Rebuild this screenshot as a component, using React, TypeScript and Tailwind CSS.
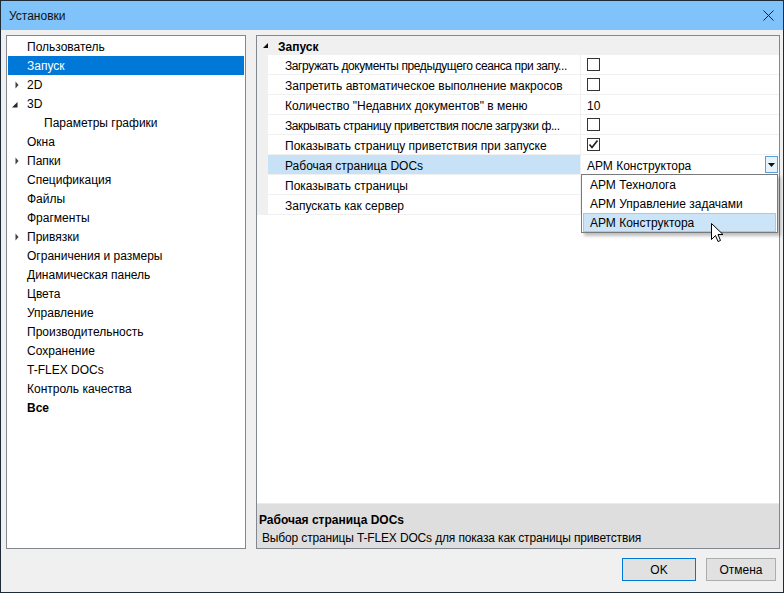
import React from "react";

type TreeItem = {
  label: string;
  selected?: boolean;
  arrow?: "right" | "down";
  indent?: boolean;
  bold?: boolean;
};

const treeItems: TreeItem[] = [
  { label: "Пользователь" },
  { label: "Запуск", selected: true },
  { label: "2D", arrow: "right" },
  { label: "3D", arrow: "down" },
  { label: "Параметры графики", indent: true },
  { label: "Окна" },
  { label: "Папки", arrow: "right" },
  { label: "Спецификация" },
  { label: "Файлы" },
  { label: "Фрагменты" },
  { label: "Привязки", arrow: "right" },
  { label: "Ограничения и размеры" },
  { label: "Динамическая панель" },
  { label: "Цвета" },
  { label: "Управление" },
  { label: "Производительность" },
  { label: "Сохранение" },
  { label: "T-FLEX DOCs" },
  { label: "Контроль качества" },
  { label: "Все", bold: true },
];

type Prop = {
  label: string;
  value?: "check" | "checked" | "text" | "combo" | "none";
  text?: string;
  selected?: boolean;
  tight?: boolean;
};

const props: Prop[] = [
  { label: "Загружать документы предыдущего сеанса при запу...", value: "check", tight: true },
  { label: "Запретить автоматическое выполнение макросов", value: "check" },
  { label: "Количество \"Недавних документов\" в меню", value: "text", text: "10" },
  { label: "Закрывать страницу приветствия после загрузки ф...", value: "check", tight: true },
  { label: "Показывать страницу приветствия при запуске", value: "checked" },
  { label: "Рабочая страница DOCs", value: "combo", selected: true },
  { label: "Показывать страницы", value: "none" },
  { label: "Запускать как сервер", value: "none" },
];

function Arrow({ kind }: { kind?: "right" | "down" }) {
  return (
    <svg width="19" height="19" viewBox="0 0 19 19" className="shrink-0">
      {kind === "right" && <polygon points="7.5,6.5 10.5,10 7.5,13.5" fill="#404040" />}
      {kind === "down" && <polygon points="9.5,8 9.5,13.5 4,13.5" fill="#262626" />}
    </svg>
  );
}

function CheckBox({ checked }: { checked?: boolean }) {
  return (
    <div className="w-[13px] h-[13px] border border-[#333333] bg-white flex items-center justify-center">
      {checked && (
        <svg width="11" height="11" viewBox="0 0 11 11">
          <path d="M1.5 5.5 L4 8.5 L9.5 1.5" fill="none" stroke="#1a1a1a" strokeWidth="1.6" />
        </svg>
      )}
    </div>
  );
}

export default function App() {
  return (
    <div className="w-[784px] h-[593px] border border-[#1e2a36] bg-[#f0f0f0] flex flex-col text-[12px] text-black font-['Liberation_Sans',Arial,sans-serif] overflow-hidden relative">
      {/* Title bar */}
      <div className="h-[29px] shrink-0 bg-[#80c3fa] flex items-center justify-between pl-[8px] pr-[9px]">
        <span className="text-[12px] text-[#111]">Установки</span>
        <svg width="11" height="11" viewBox="0 0 11 11">
          <path d="M0.5 0.5 L10.5 10.5 M10.5 0.5 L0.5 10.5" stroke="#1a1a1a" strokeWidth="1" />
        </svg>
      </div>

      {/* Body */}
      <div className="flex-1 flex flex-col pl-[5px] pr-[3px] pt-[5px] pb-[11px]">
        <div className="h-[514px] flex gap-[10px]">
          {/* Tree */}
          <div className="w-[240px] shrink-0 border border-[#828790] bg-white p-[1px] leading-[19px]">
            {treeItems.map((it) => (
              <div
                key={it.label}
                className={`h-[19px] flex items-center ${it.selected ? "bg-[#0078d7] text-white" : ""}`}
              >
                <Arrow kind={it.arrow} />
                <span
                  className={`pt-[2px] ${it.indent ? "pl-[17px]" : ""} ${it.bold ? "font-bold" : ""} whitespace-nowrap`}
                >
                  {it.label}
                </span>
              </div>
            ))}
          </div>

          {/* Property grid */}
          <div className="flex-1 border border-[#828790] bg-white flex flex-col">
            <div className="flex-1 flex flex-col">
              {/* Category header */}
              <div className="h-[19px] bg-[#f0f0f0] flex items-center">
                <svg width="21" height="19" viewBox="0 0 21 19" className="shrink-0">
                  <polygon points="11,7 11,12 6,12" fill="#111" />
                </svg>
                <span className="font-bold pt-[2px]">Запуск</span>
              </div>
              {props.map((p) => (
                <div key={p.label} className="h-[20px] flex border-b border-[#f0f0f0]">
                  <div className="w-[11px] shrink-0 bg-[#f0f0f0]" />
                  <div
                    className={`w-[313px] shrink-0 border-r border-[#f0f0f0] pl-[17px] pt-[2px] flex items-center overflow-hidden whitespace-nowrap ${
                      p.selected ? "bg-[#c7e2f6]" : ""
                    } ${p.tight ? "tracking-[-0.4px]" : ""}`}
                  >
                    {p.label}
                  </div>
                  <div className="flex-1 relative flex items-center pl-[6px] pr-[1px]">
                    {p.value === "check" && <CheckBox />}
                    {p.value === "checked" && <CheckBox checked />}
                    {p.value === "text" && <span className="pt-[2px]">{p.text}</span>}
                    {p.value === "combo" && (
                      <>
                        <span className="flex-1 pt-[2px]">АРМ Конструктора</span>
                        <div className="w-[13px] h-[17px] border border-[#5b9fd8] bg-[#e8f2fb] flex items-center justify-center">
                          <svg width="7" height="4" viewBox="0 0 7 4">
                            <polygon points="0,0 7,0 3.5,4" fill="#111" />
                          </svg>
                        </div>
                        <div className="absolute left-0 top-[19px] w-[197px] border border-[#7a7a7a] bg-white px-[1px] shadow-[3px_3px_3px_rgba(0,0,0,0.25)] z-10">
                          <div className="h-[19px] flex items-center pl-[7px]">АРМ Технолога</div>
                          <div className="h-[19px] flex items-center pl-[7px]">АРМ Управление задачами</div>
                          <div className="h-[19px] flex items-center pl-[6px] pt-[1px] border border-[#99cdf3] bg-[#cce4f7]">
                            АРМ Конструктора
                          </div>
                        </div>
                      </>
                    )}
                  </div>
                </div>
              ))}
            </div>
            {/* Help pane */}
            <div className="h-[45px] shrink-0 border-t border-[#ebebeb] bg-[#dedede] flex flex-col pt-[8px] leading-[17px]">
              <span className="pl-[2px] font-bold">Рабочая страница DOCs</span>
              <span className="pl-[5px] pt-[1px] tracking-[-0.15px]">
                Выбор страницы T-FLEX DOCs для показа как страницы приветствия
              </span>
            </div>
          </div>
        </div>

        {/* Buttons */}
        <div className="mt-[9px] flex justify-end gap-[10px] pr-[4px]">
          <button className="w-[74px] h-[23px] border border-[#0078d7] bg-[#e1e1e1] text-[12px]">OK</button>
          <button className="w-[70px] h-[23px] border border-[#adadad] bg-[#e1e1e1] text-[12px]">Отмена</button>
        </div>
      </div>

      {/* Mouse cursor */}
      <svg
        width="13"
        height="21"
        viewBox="0 0 13 21"
        className="absolute left-[710px] top-[222px] z-20"
      >
        <path
          d="M0.5 0.5 L0.5 16.5 L4.5 12.5 L7 18.5 L9.5 17.5 L7 11.5 L12 11.5 Z"
          fill="#fff"
          stroke="#000"
          strokeWidth="1"
          strokeLinejoin="miter"
        />
      </svg>
    </div>
  );
}
